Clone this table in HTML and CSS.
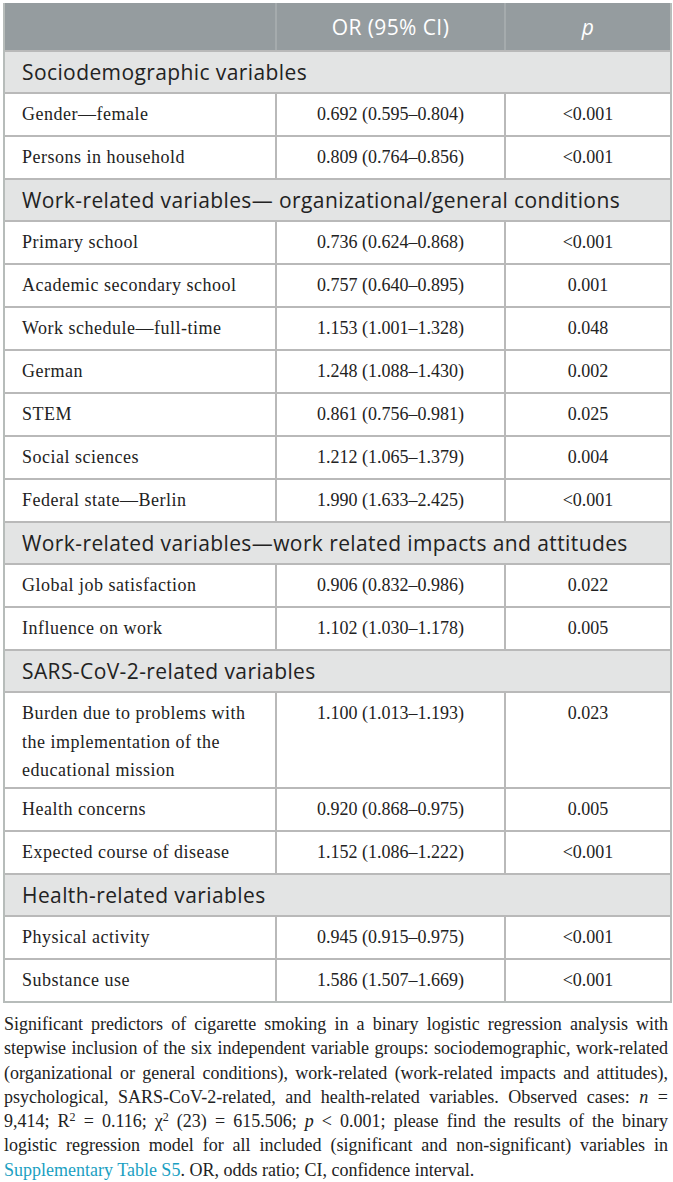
FILE: index.html
```html
<!DOCTYPE html>
<html lang="en">
<head>
<meta charset="utf-8">
<link rel="stylesheet" href="styles.css">
</head>
<body>
<div class="page">
<table class="tbl">
  <colgroup>
    <col class="c1"><col class="c2"><col class="c3">
  </colgroup>
  <thead>
    <tr class="head"><th></th><th>OR (95% CI)</th><th><i>p</i></th></tr>
  </thead>
  <tbody>
    <tr class="sec"><td colspan="3">Sociodemographic variables</td></tr>
    <tr><td>Gender—female</td><td>0.692 (0.595–0.804)</td><td>&lt;0.001</td></tr>
    <tr><td>Persons in household</td><td>0.809 (0.764–0.856)</td><td>&lt;0.001</td></tr>
    <tr class="sec"><td colspan="3">Work-related variables— organizational/general conditions</td></tr>
    <tr><td>Primary school</td><td>0.736 (0.624–0.868)</td><td>&lt;0.001</td></tr>
    <tr><td>Academic secondary school</td><td>0.757 (0.640–0.895)</td><td>0.001</td></tr>
    <tr><td>Work schedule—full-time</td><td>1.153 (1.001–1.328)</td><td>0.048</td></tr>
    <tr><td>German</td><td>1.248 (1.088–1.430)</td><td>0.002</td></tr>
    <tr><td>STEM</td><td>0.861 (0.756–0.981)</td><td>0.025</td></tr>
    <tr><td>Social sciences</td><td>1.212 (1.065–1.379)</td><td>0.004</td></tr>
    <tr><td>Federal state—Berlin</td><td>1.990 (1.633–2.425)</td><td>&lt;0.001</td></tr>
    <tr class="sec"><td colspan="3">Work-related variables—work related impacts and attitudes</td></tr>
    <tr><td>Global job satisfaction</td><td>0.906 (0.832–0.986)</td><td>0.022</td></tr>
    <tr><td>Influence on work</td><td>1.102 (1.030–1.178)</td><td>0.005</td></tr>
    <tr class="sec"><td colspan="3">SARS-CoV-2-related variables</td></tr>
    <tr class="tall"><td>Burden due to problems with the implementation of the educational mission</td><td>1.100 (1.013–1.193)</td><td>0.023</td></tr>
    <tr><td>Health concerns</td><td>0.920 (0.868–0.975)</td><td>0.005</td></tr>
    <tr><td>Expected course of disease</td><td>1.152 (1.086–1.222)</td><td>&lt;0.001</td></tr>
    <tr class="sec"><td colspan="3">Health-related variables</td></tr>
    <tr><td>Physical activity</td><td>0.945 (0.915–0.975)</td><td>&lt;0.001</td></tr>
    <tr><td>Substance use</td><td>1.586 (1.507–1.669)</td><td>&lt;0.001</td></tr>
  </tbody>
</table>
<p class="caption"><span class="ln">Significant predictors of cigarette smoking in a binary logistic regression analysis with</span> <span class="ln">stepwise inclusion of the six independent variable groups: sociodemographic, work-related</span> <span class="ln">(organizational or general conditions), work-related (work-related impacts and attitudes),</span> <span class="ln">psychological, SARS-CoV-2-related, and health-related variables. Observed cases: <i>n</i> =</span> <span class="ln">9,414; R<sup>2</sup> = 0.116; χ<sup>2</sup> (23) = 615.506; <i>p</i> &lt; 0.001; please find the results of the binary</span> <span class="ln">logistic regression model for all included (significant and non-significant) variables in</span> <span class="ln last"><a class="link" href="#">Supplementary Table S5</a>. OR, odds ratio; CI, confidence interval.</span></p>
</div>
</body>
</html>
```

FILE: styles.css
```css
html, body {
  margin: 0;
  padding: 0;
  background: #ffffff;
}

.page {
  padding: 3px 5px 0 3px;
  width: 665px;
}

.tbl {
  width: 665px;
  border-collapse: separate;
  border-spacing: 0;
  table-layout: fixed;
  border-left: 2px solid #b7bcba;
  border-right: 2px solid #b7bcba;
  border-bottom: 2px solid #b7bcba;
}

.c1 { width: 270px; }
.c2 { width: 229px; }
.c3 { width: 166px; }

.head th {
  background: #959c9f;
  color: #ffffff;
  font-family: "Open Sans", "Noto Sans", sans-serif;
  font-weight: 400;
  font-size: 21px;
  letter-spacing: 0.4px;
  line-height: 28px;
  height: 47px;
  padding: 0;
  text-align: center;
  box-sizing: border-box;
}

.head th + th {
  border-left: 2px solid #a5abad;
}

.sec td {
  background: #e3e4e4;
  color: #222222;
  font-family: "Open Sans", "Noto Sans", sans-serif;
  font-size: 21px;
  letter-spacing: 0.4px;
  line-height: 28px;
  height: 42px;
  padding: 0 0 0 17px;
  border-top: 2px solid #b9b9b9;
  box-sizing: border-box;
}

tbody tr:not(.sec) td {
  font-family: "Liberation Serif", "Times New Roman", serif;
  font-size: 18px;
  line-height: 28.5px;
  color: #222222;
  height: 43px;
  padding: 6px 10px 6px 17px;
  border-top: 2px solid #b9b9b9;
  box-sizing: border-box;
  vertical-align: top;
}

tbody tr:not(.sec) td:first-child {
  letter-spacing: 0.5px;
}

tbody tr:not(.sec) td + td {
  border-left: 2px solid #b9b9b9;
  text-align: center;
  padding-left: 10px;
}

tbody tr.tall td {
  height: 96px;
  padding-bottom: 2px;
}

.caption {
  margin: 9px 0 0 1px;
  width: 664px;
  font-family: "Liberation Serif", "Times New Roman", serif;
  font-size: 18px;
  line-height: 24.3px;
  color: #222222;
  text-align: justify;
}

.ln {
  display: block;
  white-space: nowrap;
  text-align: justify;
  text-align-last: justify;
}

.ln.last {
  text-align-last: left;
}

.caption sup {
  font-size: 12px;
  line-height: 0;
  vertical-align: 6px;
}

.link {
  color: #1a9fc2;
  text-decoration: none;
}
```
